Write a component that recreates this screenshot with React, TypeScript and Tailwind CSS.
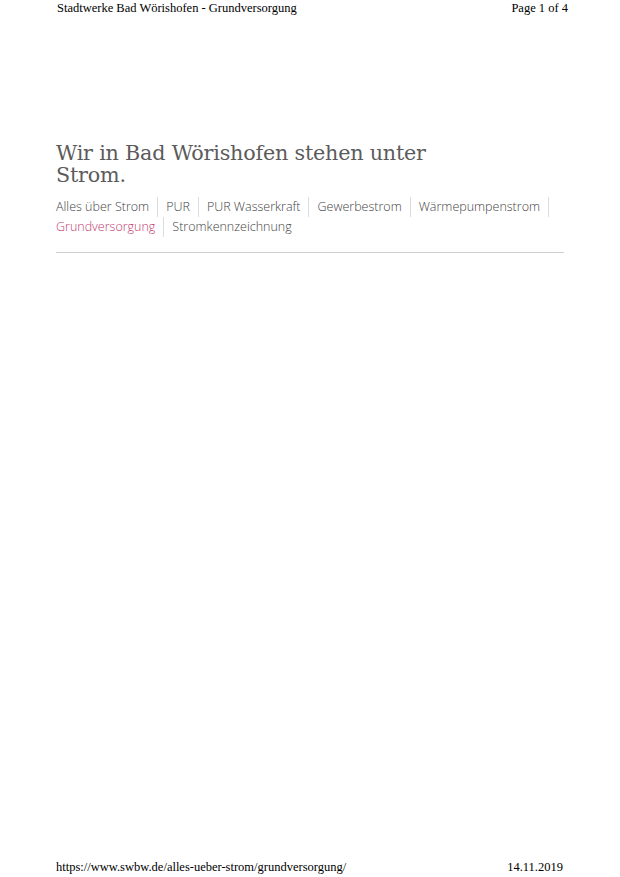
export default function App() {
  const row1 = ["Alles über Strom", "PUR", "PUR Wasserkraft", "Gewerbestrom", "Wärmepumpenstrom"];

  return (
    <div className="w-[620px] h-[877px] bg-white flex flex-col">
      <div className="flex justify-between pl-[57px] pr-[52px] pt-[1px] text-[12.5px] leading-[14px] text-black font-['Liberation_Serif',serif]">
        <span>Stadtwerke Bad Wörishofen - Grundversorgung</span>
        <span>Page 1 of 4</span>
      </div>

      <div className="pl-[56px] pr-[56px] mt-[127px]">
        <h1 className="font-['DejaVu_Serif',serif] text-[20.7px] leading-[22px] text-[#5b5b5b] tracking-[-0.2px]">
          Wir in Bad Wörishofen stehen unter
          <br />
          Strom.
        </h1>

        <nav className="mt-[11px] font-['Open_Sans',sans-serif] font-light text-[12.5px] leading-[20px] text-[#444]">
          <div className="flex">
            {row1.map((item, i) => (
              <span
                key={item}
                className={
                  "shrink-0 whitespace-nowrap border-r border-[#dcdcdc] pr-[8px] " + (i > 0 ? "pl-[8px]" : "")
                }
              >
                {item}
              </span>
            ))}
          </div>
          <div className="flex">
            <span className="shrink-0 whitespace-nowrap border-r border-[#dcdcdc] pr-[8px] text-[#c43a6e]">Grundversorgung</span>
            <span className="shrink-0 whitespace-nowrap pl-[8px]">Stromkennzeichnung</span>
          </div>
        </nav>

        <div className="mt-[15px] border-t border-[#cfcfcf]" />
      </div>

      <div className="mt-auto flex justify-between pl-[56px] pr-[57px] pb-[3px] text-[12.5px] leading-[14px] text-black font-['Liberation_Serif',serif]">
        <span>https://www.swbw.de/alles-ueber-strom/grundversorgung/</span>
        <span>14.11.2019</span>
      </div>
    </div>
  );
}
